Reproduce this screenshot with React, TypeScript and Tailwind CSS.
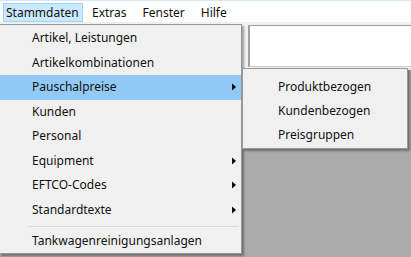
import React from "react";

const mainItems: { label: string; sub?: boolean; active?: boolean }[] = [
  { label: "Artikel, Leistungen" },
  { label: "Artikelkombinationen" },
  { label: "Pauschalpreise", sub: true, active: true },
  { label: "Kunden" },
  { label: "Personal" },
  { label: "Equipment", sub: true },
  { label: "EFTCO-Codes", sub: true },
  { label: "Standardtexte", sub: true },
];

const subItems = ["Produktbezogen", "Kundenbezogen", "Preisgruppen"];

function Arrow() {
  return (
    <svg width="4" height="7" viewBox="0 0 4 7" className="absolute right-[5px] top-1/2 -translate-y-1/2">
      <path d="M0 0 L4 3.5 L0 7 Z" fill="#000" />
    </svg>
  );
}

export default function App() {
  return (
    <div
      className="relative w-[411px] h-[257px] overflow-hidden bg-[#ababab] text-[12px] text-[#111]"
      style={{ fontFamily: '"Noto Sans", "Open Sans", sans-serif' }}
    >
      {/* menu bar */}
      <div className="h-[22px] bg-white border-t border-[#dbe6f3] flex items-stretch pt-[2px]">
        <div className="ml-[3px] w-[80px] bg-[#cce8ff] border border-[#99d1ff] pl-[2px] flex items-center leading-none">
          Stammdaten
        </div>
        <div className="ml-[9px] flex items-center leading-none">Extras</div>
        <div className="ml-[16px] flex items-center leading-none">Fenster</div>
        <div className="ml-[16px] flex items-center leading-none">Hilfe</div>
      </div>

      {/* toolbar strip */}
      <div className="h-[48px] bg-[#f0f0f0] flex pt-[3px] pb-[2px]">
        <div className="ml-auto w-[163px] h-[42px] bg-white border-l-2 border-t border-b border-l-[#a0a0a0] border-t-[#a0a0a0] border-b-[#c8c8c8]" />
      </div>

      {/* main dropdown */}
      <div className="absolute left-[-1px] top-[24px] w-[243px] h-[230px] bg-[#f0f0f0] border border-[#979797] shadow-[2px_2px_2px_rgba(0,0,0,0.35)] pt-[1px]">
        {mainItems.map((it) => (
          <div
            key={it.label}
            className={`relative h-[24.5px] flex items-center pl-[32px] leading-none ${
              it.active ? "bg-[#91c9f7]" : ""
            }`}
          >
            {it.label}
            {it.sub && <Arrow />}
          </div>
        ))}
        <div className="h-[8px] flex items-center pl-[28px] pr-[2px]">
          <div className="h-px w-full bg-[#d7d7d7]" />
        </div>
        <div className="h-[22px] flex items-center pl-[32px] leading-none">Tankwagenreinigungsanlagen</div>
      </div>

      {/* submenu */}
      <div className="absolute left-[242px] top-[68px] w-[166px] h-[81px] bg-[#f0f0f0] border border-[#979797] shadow-[2px_2px_2px_rgba(0,0,0,0.35)] pt-[6px]">
        {subItems.map((s) => (
          <div key={s} className="h-[24px] flex items-center pl-[35px] leading-none">
            {s}
          </div>
        ))}
      </div>
    </div>
  );
}
